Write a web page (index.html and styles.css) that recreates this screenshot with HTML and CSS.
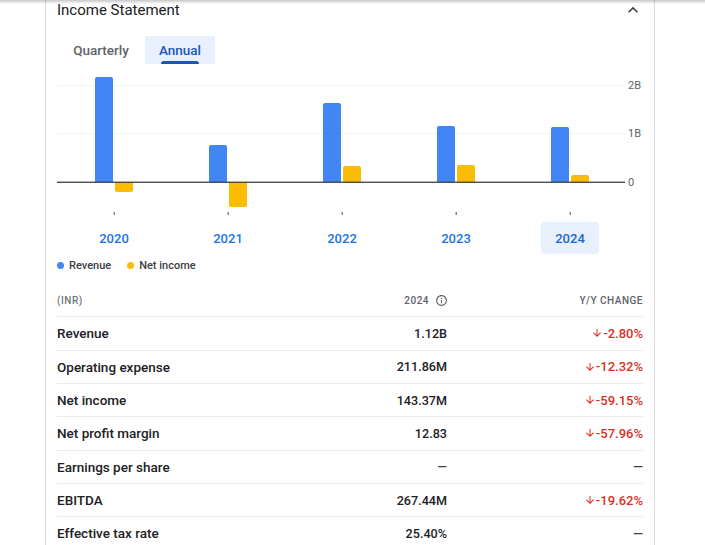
FILE: index.html
```html
<!DOCTYPE html>
<html>
<head>
<meta charset="utf-8">
<link rel="stylesheet" href="styles.css">
</head>
<body>
<div class="topshade"></div>
<section class="card">
  <header class="card-head">
    <h2 class="title">Income Statement</h2>
    <svg class="chev" viewBox="0 0 24 24"><path d="M12 8l-6 6 1.41 1.41L12 10.83l4.59 4.58L18 14z"/></svg>
  </header>

  <div class="tabs">
    <button class="tab">Quarterly</button>
    <button class="tab active">Annual</button>
  </div>

  <svg class="chart" width="586" height="146" viewBox="0 0 586 146">
    <rect class="grid" x="0" y="15" width="568" height="1"/>
    <rect class="grid" x="0" y="63" width="568" height="1"/>
    <text class="ylab" x="571" y="15.5">2B</text>
    <text class="ylab" x="571" y="63.5">1B</text>
    <text class="ylab" x="571" y="112.5">0</text>

    <path class="rev" d="M38 112V9Q38 7 40 7H54Q56 7 56 9V112Z"/>
    <path class="ni" d="M58 112V120Q58 122 60 122H74Q76 122 76 120V112Z"/>
    <path class="rev" d="M152 112V77Q152 75 154 75H168Q170 75 170 77V112Z"/>
    <path class="ni" d="M172 112V135Q172 137 174 137H188Q190 137 190 135V112Z"/>
    <path class="rev" d="M266 112V35Q266 33 268 33H282Q284 33 284 35V112Z"/>
    <path class="ni" d="M286 112V98Q286 96 288 96H302Q304 96 304 98V112Z"/>
    <path class="rev" d="M380 112V58Q380 56 382 56H396Q398 56 398 58V112Z"/>
    <path class="ni" d="M400 112V97Q400 95 402 95H416Q418 95 418 97V112Z"/>
    <path class="rev" d="M494 112V59Q494 57 496 57H510Q512 57 512 59V112Z"/>
    <path class="ni" d="M514 112V107Q514 105 516 105H530Q532 105 532 107V112Z"/>

    <rect class="axis" x="0" y="111.6" width="568" height="1.3"/>

    <rect class="tick" x="56.5" y="142" width="1.5" height="3"/>
    <rect class="tick" x="170.5" y="142" width="1.5" height="3"/>
    <rect class="tick" x="284.5" y="142" width="1.5" height="3"/>
    <rect class="tick" x="398.5" y="142" width="1.5" height="3"/>
    <rect class="tick" x="512.5" y="142" width="1.5" height="3"/>
  </svg>

  <div class="years">
    <button class="year">2020</button>
    <button class="year">2021</button>
    <button class="year">2022</button>
    <button class="year">2023</button>
    <button class="year sel">2024</button>
  </div>

  <div class="legend">
    <span class="lg"><i class="dot dot-rev"></i>Revenue</span>
    <span class="lg"><i class="dot dot-ni"></i>Net income</span>
  </div>

  <div class="table">
    <div class="row head">
      <span class="c-label muted">(INR)</span>
      <span class="c-val">2024<svg class="info" viewBox="0 0 24 24"><path d="M11 7h2v2h-2zm0 4h2v6h-2zm1-9C6.48 2 2 6.48 2 12s4.48 10 10 10 10-4.48 10-10S17.52 2 12 2zm0 18c-4.41 0-8-3.59-8-8s3.59-8 8-8 8 3.59 8 8-3.59 8-8 8z"/></svg></span>
      <span class="c-chg">Y/Y CHANGE</span>
    </div>
    <div class="row">
      <span class="c-label">Revenue</span>
      <span class="c-val">1.12B</span>
      <span class="c-chg down"><svg class="arr" viewBox="0 0 24 24"><path d="M20 12l-1.41-1.41L13 16.17V4h-2v12.17l-5.58-5.59L4 12l8 8 8-8z"/></svg>-2.80%</span>
    </div>
    <div class="row">
      <span class="c-label">Operating expense</span>
      <span class="c-val">211.86M</span>
      <span class="c-chg down"><svg class="arr" viewBox="0 0 24 24"><path d="M20 12l-1.41-1.41L13 16.17V4h-2v12.17l-5.58-5.59L4 12l8 8 8-8z"/></svg>-12.32%</span>
    </div>
    <div class="row">
      <span class="c-label">Net income</span>
      <span class="c-val">143.37M</span>
      <span class="c-chg down"><svg class="arr" viewBox="0 0 24 24"><path d="M20 12l-1.41-1.41L13 16.17V4h-2v12.17l-5.58-5.59L4 12l8 8 8-8z"/></svg>-59.15%</span>
    </div>
    <div class="row">
      <span class="c-label">Net profit margin</span>
      <span class="c-val">12.83</span>
      <span class="c-chg down"><svg class="arr" viewBox="0 0 24 24"><path d="M20 12l-1.41-1.41L13 16.17V4h-2v12.17l-5.58-5.59L4 12l8 8 8-8z"/></svg>-57.96%</span>
    </div>
    <div class="row">
      <span class="c-label">Earnings per share</span>
      <span class="c-val dash">—</span>
      <span class="c-chg dash">—</span>
    </div>
    <div class="row">
      <span class="c-label">EBITDA</span>
      <span class="c-val">267.44M</span>
      <span class="c-chg down"><svg class="arr" viewBox="0 0 24 24"><path d="M20 12l-1.41-1.41L13 16.17V4h-2v12.17l-5.58-5.59L4 12l8 8 8-8z"/></svg>-19.62%</span>
    </div>
    <div class="row">
      <span class="c-label">Effective tax rate</span>
      <span class="c-val">25.40%</span>
      <span class="c-chg dash">—</span>
    </div>
  </div>
</section>
</body>
</html>
```

FILE: styles.css
```css
html, body {
  margin: 0;
  padding: 0;
  background: #ffffff;
  overflow: hidden;
  height: 100%;
}

body {
  font-family: Roboto, "Liberation Sans", Arial, sans-serif;
  color: #202124;
}

.topshade {
  position: fixed;
  top: 0;
  left: 0;
  right: 0;
  height: 4px;
  background: linear-gradient(rgba(0, 0, 0, 0.22), rgba(0, 0, 0, 0));
  z-index: 5;
}

.card {
  margin-left: 45px;
  width: 610px;
  box-sizing: border-box;
  min-height: 100%;
  border-left: 1px solid #dadce0;
  border-right: 1px solid #dadce0;
  padding: 0 11px;
  background: #fff;
}

.card-head {
  display: flex;
  justify-content: space-between;
  align-items: flex-start;
  height: 20px;
}

.title {
  margin: 0;
  font-size: 15px;
  line-height: 20px;
  font-weight: 400;
  color: #202124;
}

.chev {
  width: 20px;
  height: 20px;
  fill: #3c4043;
}

.tabs {
  display: grid;
  grid-template-columns: 88px 70px;
  margin-top: 16px;
  height: 28px;
}

.tab {
  position: relative;
  border: none;
  background: none;
  margin: 0;
  padding: 0;
  height: 28px;
  font-family: inherit;
  font-size: 13.5px;
  font-weight: 500;
  color: #5f6368;
  line-height: 27px;
}

.tab.active {
  background: #e8f0fe;
  color: #1a56b8;
}

.tab.active::after {
  content: "";
  position: absolute;
  left: 16px;
  right: 16px;
  bottom: 0;
  height: 3px;
  border-radius: 3px 3px 0 0;
  background: #1a56b8;
}

.chart {
  display: block;
  margin-top: 6px;
}

.grid { fill: #f1f3f4; }
.axis { fill: #3c4043; }
.tick { fill: #80868b; }
.rev { fill: #4285f4; }
.ni { fill: #fbbc04; }

.ylab {
  font-family: Roboto, "Liberation Sans", Arial, sans-serif;
  font-size: 11px;
  fill: #5f6368;
  dominant-baseline: central;
}

.years {
  display: flex;
  gap: 56px;
  padding-left: 28px;
  margin-top: 6px;
}

.year {
  width: 58px;
  height: 32px;
  border: none;
  border-radius: 4px;
  background: none;
  padding: 0;
  font-family: inherit;
  font-size: 13px;
  font-weight: 500;
  color: #1a73e8;
}

.year.sel {
  background: #e8f0fe;
  color: #1967d2;
}

.legend {
  display: flex;
  align-items: center;
  gap: 16px;
  height: 14px;
  margin-top: 4px;
  font-size: 11px;
  font-weight: 500;
  color: #3c4043;
}

.lg {
  display: flex;
  align-items: center;
}

.dot {
  display: inline-block;
  width: 7px;
  height: 7px;
  border-radius: 50%;
  margin-right: 5px;
}

.dot-rev { background: #4285f4; }
.dot-ni { background: #fbbc04; }

.table {
  margin-top: 13px;
}

.row {
  display: grid;
  grid-template-columns: 1fr 150px 196px;
  align-items: center;
  height: 33.33px;
  box-sizing: border-box;
  border-bottom: 1px solid #e8eaed;
  font-size: 13px;
  font-weight: 500;
  color: #202124;
}

.row .c-label {
  font-size: 13.5px;
}

.row.head {
  height: 32.33px;
  font-size: 10px;
  letter-spacing: 0.5px;
  color: #5f6368;
}

.row.head .c-label {
  font-size: 10px;
}

.muted { color: #70757a; }

.c-val {
  display: flex;
  align-items: center;
  justify-content: flex-end;
  font-size: 12.6px;
}

.row.head .c-val {
  font-size: 10px;
}

.c-chg {
  display: flex;
  align-items: center;
  justify-content: flex-end;
}

.info {
  width: 13px;
  height: 13px;
  margin-left: 6px;
  margin-right: -1px;
  fill: #5f6368;
}

.down { color: #d93025; }

.arr {
  width: 12px;
  height: 12px;
  fill: #d93025;
}

.dash { color: #3c4043; }
```
